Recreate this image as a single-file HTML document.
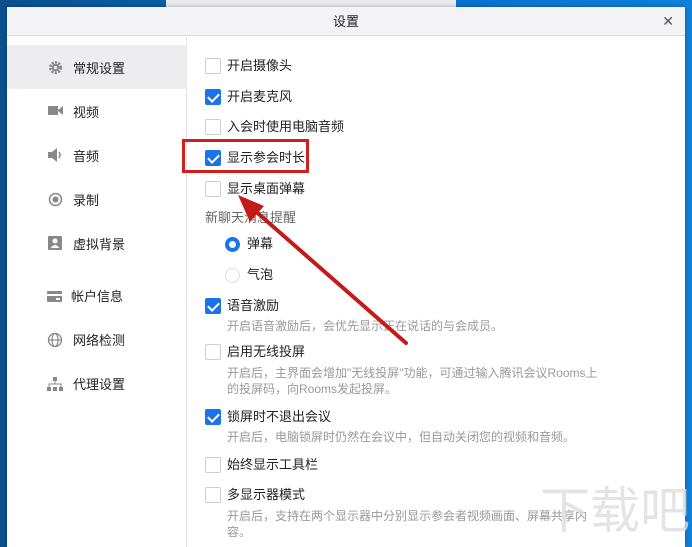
<!DOCTYPE html>
<html><head><meta charset="utf-8"><style>
*{margin:0;padding:0;box-sizing:border-box}
body{width:692px;height:544px;overflow:hidden;position:relative;background:linear-gradient(90deg,#0b4f8c,#0a66b8 40%,#0a72d0 70%,#1180d8);font-family:"Liberation Sans","Noto Sans CJK SC",sans-serif;font-size:13px;color:#222}
.topw{position:absolute;left:166px;top:0;width:290px;height:8px;background:#e8e9eb}
.dlg{position:absolute;left:7px;top:7px;width:678px;height:540px;background:#fff;box-shadow:0 0 4px rgba(0,0,0,.3)}
.title{height:29px;background:#f3f3f5;border-bottom:1px solid #dcdcdc;text-align:center;line-height:29px;font-size:13px;color:#222}
.close{position:absolute;right:11px;top:6px;font-size:14px;color:#555}
.side{position:absolute;left:0;top:30px;width:180px;bottom:0;border-right:1px solid #e2e2e2}
.sel{position:absolute;left:0;top:8px;width:180px;height:44px;background:#ededef}
.si{position:absolute;left:66px;font-size:13px;color:#222;margin-top:-2px}
.row{position:absolute;left:198px;font-size:13px;color:#222}
.cb{position:absolute;left:198px;width:16px;height:16px;border:1px solid #cfcfcf;border-radius:2px;background:#fff}
.cb.on{background:#1a73e8;border-color:#1a73e8}
.cb.on:after{content:"";position:absolute;left:4px;top:1px;width:5px;height:9px;border:solid #fff;border-width:0 2px 2px 0;transform:rotate(45deg)}
.lbl{position:absolute;left:220px;font-size:13px;color:#222;line-height:16px}
.desc{position:absolute;left:220px;font-size:12px;color:#999;line-height:16px}
</style></head><body>
<div class="topw"></div>
<div class="dlg">
<div class="title">设置</div><div class="close">✕</div>
<div class="side">
<div class="sel"></div>
<svg style="position:absolute;left:41px;top:23px" width="15" height="15" viewBox="0 0 16 16"><circle cx="8" cy="8" r="5.5" fill="none" stroke="#888" stroke-width="3" stroke-dasharray="2.2 1.4"/><circle cx="8" cy="8" r="4" fill="#888"/><circle cx="8" cy="8" r="1.8" fill="#ededef"/></svg>
<div class="si" style="top:23px">常规设置</div>
<svg style="position:absolute;left:41px;top:67px" width="15" height="13"><rect x="0" y="2" width="10" height="9" fill="#888"/><path d="M10 6 L15 2 V11 L10 7Z" fill="#888"/></svg>
<div class="si" style="top:67px">视频</div>
<svg style="position:absolute;left:41px;top:111px" width="15" height="14"><path d="M0 4H4L9 0V14L4 10H0Z" fill="#888"/><path d="M11 4Q13 7 11 10" stroke="#888" fill="none" stroke-width="1.5"/></svg>
<div class="si" style="top:111px">音频</div>
<svg style="position:absolute;left:41px;top:155px" width="15" height="15"><circle cx="7.5" cy="7.5" r="6" fill="none" stroke="#888" stroke-width="1.5"/><circle cx="7.5" cy="7.5" r="3" fill="#888"/></svg>
<div class="si" style="top:155px">录制</div>
<svg style="position:absolute;left:41px;top:199px" width="14" height="14"><rect width="14" height="14" rx="1" fill="#888"/><circle cx="7" cy="5" r="2.5" fill="#fff"/><path d="M2.5 12Q7 6 11.5 12Z" fill="#fff"/></svg>
<div class="si" style="top:199px">虚拟背景</div>
<svg style="position:absolute;left:40px;top:254px" width="15" height="11"><rect width="15" height="11" rx="1" fill="#888"/><rect x="0" y="3" width="15" height="2" fill="#fff"/><rect x="9" y="7" width="4" height="2" fill="#fff"/></svg>
<div class="si" style="top:251px;left:64px">帐户信息</div>
<svg style="position:absolute;left:40px;top:295px" width="16" height="16"><circle cx="8" cy="8" r="6.5" fill="none" stroke="#888" stroke-width="1.3"/><ellipse cx="8" cy="8" rx="3" ry="6.5" fill="none" stroke="#888" stroke-width="1.2"/><path d="M1.5 8H14.5" stroke="#888" stroke-width="1.2"/></svg>
<div class="si" style="top:295px">网络检测</div>
<svg style="position:absolute;left:40px;top:340px" width="16" height="14"><rect x="6" y="0" width="4" height="4" fill="#888"/><path d="M8 4V7M2 10V7H14V10" stroke="#888" fill="none"/><rect x="0" y="10" width="4" height="4" fill="#888"/><rect x="6" y="10" width="4" height="4" fill="#888"/><rect x="12" y="10" width="4" height="4" fill="#888"/></svg>
<div class="si" style="top:339px">代理设置</div>
</div>
<div class="cb" style="top:51px"></div><div class="lbl" style="top:51px">开启摄像头</div>
<div class="cb on" style="top:82px"></div><div class="lbl" style="top:82px">开启麦克风</div>
<div class="cb" style="top:112px"></div><div class="lbl" style="top:112px">入会时使用电脑音频</div>
<div class="cb on" style="top:143px"></div><div class="lbl" style="top:143px">显示参会时长</div>
<div class="cb" style="top:174px"></div><div class="lbl" style="top:174px">显示桌面弹幕</div>
<div class="desc" style="left:198px;top:203px;color:#666;font-size:13px">新聊天消息提醒</div>
<div style="position:absolute;left:218px;top:230px;width:15px;height:15px;border:4px solid #1a73e8;border-radius:50%"></div><div class="lbl" style="left:240px;top:229px">弹幕</div>
<div style="position:absolute;left:218px;top:261px;width:15px;height:15px;border:1px solid #ddd;border-radius:50%"></div><div class="lbl" style="left:240px;top:260px">气泡</div>
<div class="cb on" style="top:291px"></div><div class="lbl" style="top:291px">语音激励</div>
<div class="desc" style="top:311px">开启语音激励后，会优先显示正在说话的与会成员。</div>
<div class="cb" style="top:337px"></div><div class="lbl" style="top:337px">启用无线投屏</div>
<div class="desc" style="top:358px">开启后，主界面会增加"无线投屏"功能，可通过输入腾讯会议Rooms上</div>
<div class="desc" style="top:374px">的投屏码，向Rooms发起投屏。</div>
<div class="cb on" style="top:402px"></div><div class="lbl" style="top:402px">锁屏时不退出会议</div>
<div class="desc" style="top:422px">开启后，电脑锁屏时仍然在会议中，但自动关闭您的视频和音频。</div>
<div class="cb" style="top:450px"></div><div class="lbl" style="top:450px">始终显示工具栏</div>
<div class="cb" style="top:480px"></div><div class="lbl" style="top:480px">多显示器模式</div>
<div class="desc" style="top:501px">开启后，支持在两个显示器中分别显示参会者视频画面、屏幕共享内</div>
<div class="desc" style="top:517px">容。</div>
</div>
<svg style="position:absolute;left:0;top:0" width="692" height="544">
<rect x="183.5" y="140.5" width="124" height="31" fill="none" stroke="#d01f1f" stroke-width="3"/>
<path d="M406 343 L245 202" stroke="#c41a1a" stroke-width="4" stroke-linecap="round"/>
<path d="M238 195 L264 206 L250 222Z" fill="#c41a1a"/>
<text x="615" y="528" font-size="50" fill="#ddd" fill-opacity="0.8" font-family="Noto Sans CJK SC,sans-serif" text-anchor="middle">下载吧</text>
</svg>
</body></html>
